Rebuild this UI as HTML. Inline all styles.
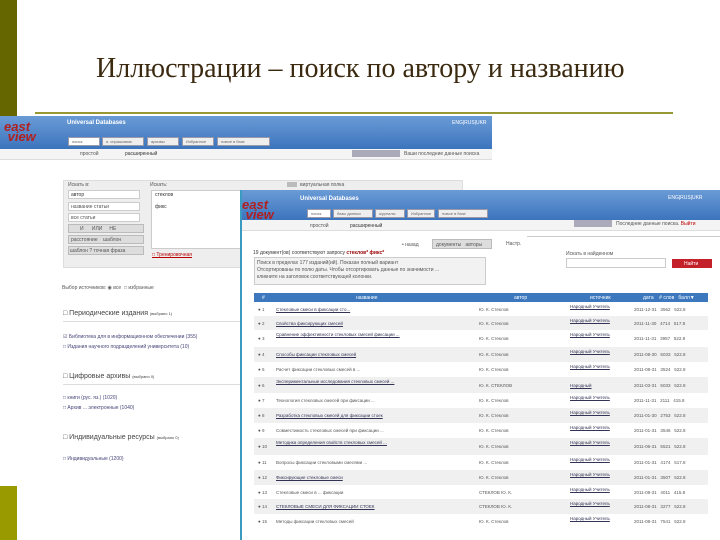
<!DOCTYPE html>
<html><head><meta charset="utf-8"><style>
*{margin:0;padding:0;box-sizing:border-box}
body{width:720px;height:540px;position:relative;overflow:hidden;background:#fff;font-family:"Liberation Sans",sans-serif;font-size:5px;color:#555}
.a{position:absolute}
.t{position:absolute;white-space:nowrap}
.hdr{background:linear-gradient(#6a9bd6,#3c74bd)}
.tab{position:absolute;height:9px;background:#eee;border:1px solid #99a;font-size:4px;color:#666;padding:1px 3px}
.logo{position:absolute;font-family:"Liberation Sans",sans-serif;font-weight:bold;color:#b02020;font-style:italic}
.row{position:absolute;left:254px;width:454px}
.row span{position:absolute;font-size:4.5px;white-space:nowrap}
.lk{color:#335;text-decoration:underline}
</style></head><body>
<div class="a" style="left:0;top:0;width:17px;height:116px;background:#666600"></div>
<div class="a" style="left:0;top:486px;width:17px;height:54px;background:#999900"></div>
<div class="t" style="left:96px;top:53px;font-family:'Liberation Serif',serif;font-size:28px;color:#3b2a10">Иллюстрации – поиск по автору и названию</div>
<div class="a" style="left:35px;top:112px;width:638px;height:2px;background:#999933"></div>

<!-- back screenshot -->
<div class="a hdr" style="left:0;top:116px;width:492px;height:33px"></div>
<div class="a" style="left:0;top:149px;width:492px;height:11px;background:#f4f4f4;border-bottom:1px solid #ddd"></div>
<div class="logo" style="left:4px;top:122px;font-size:13px;line-height:10px">east<br>&nbsp;view</div>
<div class="t" style="left:67px;top:120px;font-size:6px;color:#fff;font-weight:bold">Universal Databases</div>
<div class="t" style="left:452px;top:120px;font-size:5px;color:#fff">ENG|RUS|UKR</div>
<div class="tab" style="left:68px;top:137px;width:32px;background:#fff">поиск</div>
<div class="tab" style="left:102px;top:137px;width:42px">я. спрашиваю</div>
<div class="tab" style="left:147px;top:137px;width:32px">архивы</div>
<div class="tab" style="left:182px;top:137px;width:32px">Избранное</div>
<div class="tab" style="left:217px;top:137px;width:53px">новое в базе</div>
<div class="t" style="left:80px;top:151px">простой</div>
<div class="t" style="left:125px;top:151px;color:#333">расширенный</div>
<div class="a" style="left:352px;top:150px;width:48px;height:7px;background:#aab"></div>
<div class="t" style="left:404px;top:151px">Ваши последние данные поиска</div>

<div class="a" style="left:63px;top:180px;width:400px;height:88px;background:#eee;border:1px solid #ddd"></div>
<div class="t" style="left:68px;top:182px">Искать в:</div>
<div class="t" style="left:150px;top:182px">Искать:</div>
<div class="a" style="left:68px;top:190px;width:72px;height:9px;background:#fff;border:1px solid #ccc"></div><div class="t" style="left:71px;top:192px;color:#333">автор</div>
<div class="a" style="left:68px;top:202px;width:72px;height:9px;background:#fff;border:1px solid #ccc"></div><div class="t" style="left:71px;top:204px">название статьи</div>
<div class="a" style="left:68px;top:213px;width:72px;height:9px;background:#fff;border:1px solid #ccc"></div><div class="t" style="left:71px;top:215px">все статьи</div>
<div class="a" style="left:68px;top:224px;width:76px;height:9px;background:#ddd;border:1px solid #bbb"></div><div class="t" style="left:80px;top:226px">И &nbsp;&nbsp;&nbsp;&nbsp; ИЛИ &nbsp;&nbsp;&nbsp; НЕ</div>
<div class="a" style="left:68px;top:235px;width:76px;height:9px;background:#ddd;border:1px solid #bbb"></div><div class="t" style="left:71px;top:237px">расстояние &nbsp;&nbsp; шаблон</div>
<div class="a" style="left:68px;top:246px;width:76px;height:9px;background:#ddd;border:1px solid #bbb"></div><div class="t" style="left:70px;top:248px">шаблон ? точная фраза</div>
<div class="a" style="left:151px;top:190px;width:90px;height:59px;background:#fff;border:1px solid #ccc"></div>
<div class="t" style="left:155px;top:192px;color:#333">стеклов</div>
<div class="t" style="left:155px;top:204px;color:#333">фикс</div>
<div class="t" style="left:152px;top:252px;color:#b00;text-decoration:underline">□ Тренировочная</div>
<div class="a" style="left:287px;top:182px;width:10px;height:5px;background:#bbb"></div>
<div class="t" style="left:300px;top:182px">виртуальная полка</div>
<div class="t" style="left:62px;top:285px">Выбор источников: ◉ все &nbsp;□ избранные</div>
<div class="t" style="left:63px;top:310px;font-size:7px;color:#444">□ Периодические издания <span style="font-size:4px">(выбрано 1)</span></div>
<div class="a" style="left:63px;top:321px;width:177px;height:1px;background:#ddd"></div>
<div class="t" style="left:63px;top:334px;color:#447">☑ Библиотека для в информационном обеспечении (355)</div>
<div class="t" style="left:63px;top:344px;color:#447">□ Издания научного подразделений университета (10)</div>
<div class="t" style="left:63px;top:373px;font-size:7px;color:#444">□ Цифровые архивы <span style="font-size:4px">(выбрано 0)</span></div>
<div class="a" style="left:63px;top:384px;width:177px;height:1px;background:#ddd"></div>
<div class="t" style="left:63px;top:395px;color:#447">□ книги (рус. яз.) (1020)</div>
<div class="t" style="left:63px;top:405px;color:#447">□ Архив ... электронные (1040)</div>
<div class="t" style="left:63px;top:434px;font-size:7px;color:#444">□ Индивидуальные ресурсы <span style="font-size:4px">(выбрано 0)</span></div>
<div class="t" style="left:63px;top:456px;color:#447">□ Индивидуальные (1200)</div>

<!-- front screenshot -->
<div class="a" style="left:240px;top:190px;width:480px;height:350px;background:#fff;border-left:2px solid #3a9ac0"></div>
<div class="a hdr" style="left:242px;top:190px;width:478px;height:30px"></div>
<div class="a" style="left:242px;top:220px;width:478px;height:11px;background:#f4f4f4;border-bottom:1px solid #ddd"></div>
<div class="logo" style="left:242px;top:200px;font-size:13px;line-height:10px">east<br>&nbsp;view</div>
<div class="t" style="left:300px;top:196px;font-size:6px;color:#fff;font-weight:bold">Universal Databases</div>
<div class="t" style="left:668px;top:195px;font-size:5px;color:#fff">ENG|RUS|UKR</div>
<div class="tab" style="left:307px;top:209px;width:24px;background:#fff">поиск</div>
<div class="tab" style="left:333px;top:209px;width:40px">базы данных</div>
<div class="tab" style="left:375px;top:209px;width:30px">журналы</div>
<div class="tab" style="left:407px;top:209px;width:28px">Избранное</div>
<div class="tab" style="left:438px;top:209px;width:50px">новое в базе</div>
<div class="t" style="left:310px;top:223px">простой</div>
<div class="t" style="left:350px;top:223px;color:#333">расширенный</div>
<div class="a" style="left:574px;top:220px;width:38px;height:7px;background:#aab"></div>
<div class="t" style="left:616px;top:221px">Последние данные поиска. <span style="color:#b00">Выйти</span></div>

<div class="t" style="left:402px;top:242px">• назад</div>
<div class="a" style="left:432px;top:239px;width:60px;height:10px;background:#ddd;border:1px solid #bbb"></div><div class="t" style="left:436px;top:242px">документы &nbsp; авторы</div>
<div class="t" style="left:506px;top:241px">Настр.</div>
<div class="a" style="left:527px;top:236px;width:193px;height:1px;background:#ccc"></div>
<div class="t" style="left:253px;top:250px;font-size:5px;color:#333">19 документ(ов) соответствуют запросу <b style="color:#900">стеклов* фикс*</b></div>
<div class="a" style="left:254px;top:257px;width:232px;height:28px;background:#f2f2f2;border:1px solid #ccc"></div>
<div class="t" style="left:257px;top:260px">Поиск в пределах 177 изданий(ий). Показан полный вариант</div>
<div class="t" style="left:257px;top:267px">Отсортированы по полю даты. Чтобы отсортировать данные по значимости ...</div>
<div class="t" style="left:257px;top:274px">кликните на заголовок соответствующей колонки.</div>
<div class="t" style="left:566px;top:251px">Искать в найденном</div>
<div class="a" style="left:566px;top:258px;width:100px;height:10px;background:#fff;border:1px solid #ccc"></div>
<div class="a" style="left:672px;top:259px;width:40px;height:9px;background:#c3202a"></div><div class="t" style="left:684px;top:261px;color:#fff">Найти</div>

<div class="a" style="left:254px;top:293px;width:454px;height:9px;background:#3d78bf"></div>
<div class="t" style="left:262px;top:295px;color:#fff">#</div>
<div class="t" style="left:356px;top:295px;color:#fff">название</div>
<div class="t" style="left:514px;top:295px;color:#fff">автор</div>
<div class="t" style="left:590px;top:295px;color:#fff">источник</div>
<div class="t" style="left:643px;top:295px;color:#fff">дата &nbsp;&nbsp; # слов &nbsp; балл▼</div>

<div class="row" style="top:302px;height:14px;background:#fff"><span style="left:4px;top:5px">● 1</span><span class="lk" style="left:22px;top:5px">Стекловые смеси в фиксации сто...</span><span style="left:225px;top:5px">Ю. К. Стеклов</span><span class="lk" style="left:316px;top:2px">Народный Учитель</span><span style="left:380px;top:5px">2011-12-31 &nbsp; 3562 &nbsp; 522.8</span></div>
<div class="row" style="top:316px;height:14px;background:#f0f0f0"><span style="left:4px;top:5px">● 2</span><span class="lk" style="left:22px;top:5px">Свойства фиксирующих смесей</span><span style="left:225px;top:5px">Ю. К. Стеклов</span><span class="lk" style="left:316px;top:2px">Народный Учитель</span><span style="left:380px;top:5px">2011-11-30 &nbsp; 4714 &nbsp; 517.8</span></div>
<div class="row" style="top:330px;height:17px;background:#fff"><span style="left:4px;top:6px">● 3</span><span class="lk" style="left:22px;top:2px">Сравнение эффективности стекловых смесей фиксации ...</span><span style="left:225px;top:6px">Ю. К. Стеклов</span><span class="lk" style="left:316px;top:2px">Народный Учитель</span><span style="left:380px;top:6px">2011-11-31 &nbsp; 3957 &nbsp; 522.8</span></div>
<div class="row" style="top:347px;height:15px;background:#f0f0f0"><span style="left:4px;top:5px">● 4</span><span class="lk" style="left:22px;top:5px">Способы фиксации стекловых смесей</span><span style="left:225px;top:5px">Ю. К. Стеклов</span><span class="lk" style="left:316px;top:2px">Народный Учитель</span><span style="left:380px;top:5px">2011-08-30 &nbsp; 5033 &nbsp; 522.8</span></div>
<div class="row" style="top:362px;height:15px;background:#fff"><span style="left:4px;top:5px">● 5</span><span style="left:22px;top:5px">Расчет фиксации стекловых смесей в ...</span><span style="left:225px;top:5px">Ю. К. Стеклов</span><span class="lk" style="left:316px;top:2px">Народный Учитель</span><span style="left:380px;top:5px">2011-08-31 &nbsp; 3524 &nbsp; 522.8</span></div>
<div class="row" style="top:377px;height:16px;background:#f0f0f0"><span style="left:4px;top:6px">● 6</span><span class="lk" style="left:22px;top:2px">Экспериментальные исследования стекловых смесей ...</span><span style="left:225px;top:6px">Ю. К. СТЕКЛОВ</span><span class="lk" style="left:316px;top:6px">Народный</span><span style="left:380px;top:6px">2011-03-31 &nbsp; 5033 &nbsp; 522.8</span></div>
<div class="row" style="top:393px;height:15px;background:#fff"><span style="left:4px;top:5px">● 7</span><span style="left:22px;top:5px">Технология стекловых смесей при фиксации ...</span><span style="left:225px;top:5px">Ю. К. Стеклов</span><span class="lk" style="left:316px;top:2px">Народный Учитель</span><span style="left:380px;top:5px">2011-11-31 &nbsp; 2111 &nbsp; 415.8</span></div>
<div class="row" style="top:408px;height:15px;background:#f0f0f0"><span style="left:4px;top:5px">● 8</span><span class="lk" style="left:22px;top:5px">Разработка стекловых смесей для фиксации стоек</span><span style="left:225px;top:5px">Ю. К. Стеклов</span><span class="lk" style="left:316px;top:2px">Народный Учитель</span><span style="left:380px;top:5px">2011-01-30 &nbsp; 2753 &nbsp; 522.8</span></div>
<div class="row" style="top:423px;height:15px;background:#fff"><span style="left:4px;top:5px">● 9</span><span style="left:22px;top:5px">Совместимость стекловых смесей при фиксации ...</span><span style="left:225px;top:5px">Ю. К. Стеклов</span><span class="lk" style="left:316px;top:2px">Народный Учитель</span><span style="left:380px;top:5px">2011-01-31 &nbsp; 3546 &nbsp; 522.8</span></div>
<div class="row" style="top:438px;height:17px;background:#f0f0f0"><span style="left:4px;top:6px">● 10</span><span class="lk" style="left:22px;top:2px">Методика определения свойств стекловых смесей ...</span><span style="left:225px;top:6px">Ю. К. Стеклов</span><span class="lk" style="left:316px;top:2px">Народный Учитель</span><span style="left:380px;top:6px">2011-06-31 &nbsp; 5521 &nbsp; 522.8</span></div>
<div class="row" style="top:455px;height:15px;background:#fff"><span style="left:4px;top:5px">● 11</span><span style="left:22px;top:5px">Вопросы фиксации стекловыми смесями ...</span><span style="left:225px;top:5px">Ю. К. Стеклов</span><span class="lk" style="left:316px;top:2px">Народный Учитель</span><span style="left:380px;top:5px">2011-01-31 &nbsp; 4174 &nbsp; 517.8</span></div>
<div class="row" style="top:470px;height:15px;background:#f0f0f0"><span style="left:4px;top:5px">● 12</span><span class="lk" style="left:22px;top:5px">Фиксирующие стекловые смеси</span><span style="left:225px;top:5px">Ю. К. Стеклов</span><span class="lk" style="left:316px;top:2px">Народный Учитель</span><span style="left:380px;top:5px">2011-01-31 &nbsp; 3507 &nbsp; 522.8</span></div>
<div class="row" style="top:485px;height:14px;background:#fff"><span style="left:4px;top:5px">● 13</span><span style="left:22px;top:5px">Стекловые смеси в ... фиксации</span><span style="left:225px;top:5px">СТЕКЛОВ Ю. К.</span><span class="lk" style="left:316px;top:2px">Народный Учитель</span><span style="left:380px;top:5px">2011-08-31 &nbsp; 4011 &nbsp; 415.8</span></div>
<div class="row" style="top:499px;height:15px;background:#f0f0f0"><span style="left:4px;top:5px">● 14</span><span class="lk" style="left:22px;top:5px">СТЕКЛОВЫЕ СМЕСИ ДЛЯ ФИКСАЦИИ СТОЕК</span><span style="left:225px;top:5px">СТЕКЛОВ Ю. К.</span><span class="lk" style="left:316px;top:2px">Народный Учитель</span><span style="left:380px;top:5px">2011-08-31 &nbsp; 3277 &nbsp; 522.8</span></div>
<div class="row" style="top:514px;height:15px;background:#fff"><span style="left:4px;top:5px">● 15</span><span style="left:22px;top:5px">Методы фиксации стекловых смесей</span><span style="left:225px;top:5px">Ю. К. Стеклов</span><span class="lk" style="left:316px;top:2px">Народный Учитель</span><span style="left:380px;top:5px">2011-08-31 &nbsp; 7541 &nbsp; 522.8</span></div>
</body></html>
